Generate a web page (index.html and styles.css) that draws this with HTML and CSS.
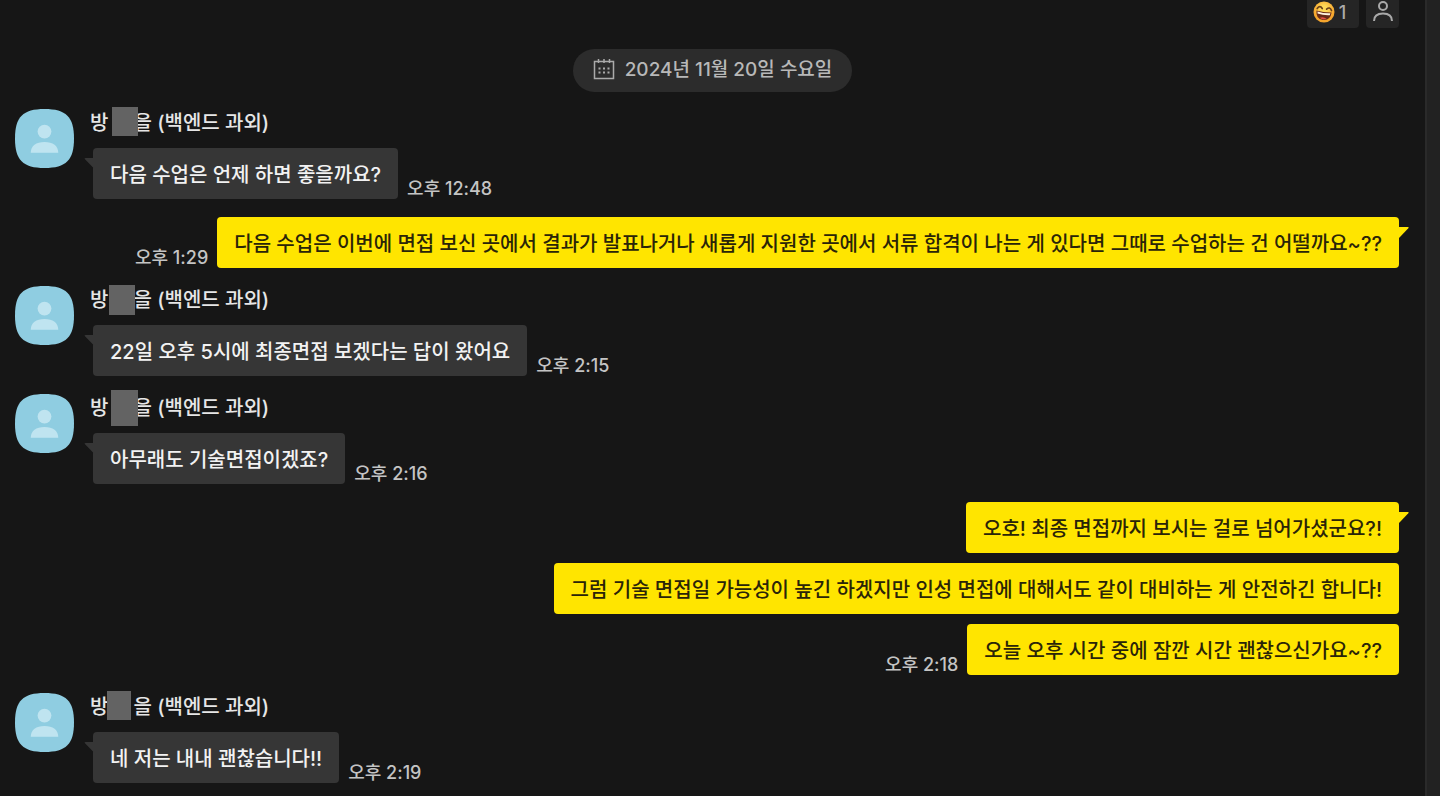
FILE: index.html
```html
<!DOCTYPE html>
<html lang="ko">
<head>
<meta charset="utf-8">
<title>채팅</title>
<link rel="stylesheet" href="styles.css">
</head>
<body>
<svg class="symbols" aria-hidden="true">
  <symbol id="avatar" viewBox="0 0 60 60">
    <path fill="#8fcde1" d="M30 0C52 0 60 8 60 30S52 60 30 60 0 52 0 30 8 0 30 0Z"/>
    <circle cx="30" cy="23" r="7" fill="#bfe4f0"/>
    <path fill="#bfe4f0" d="M16 44.500C16 37.500 21.500 33.500 30 33.500S44 37.500 44 44.500Z"/>
  </symbol>
  <symbol id="tail-left" viewBox="0 0 10 11"><path fill="#363636" d="M10 0H1.500Q-.2 0 1 1.200L10 10.500Z"/></symbol>
  <symbol id="tail-right" viewBox="0 0 10 12"><path fill="#ffe500" d="M0 0H8.800Q10.500 0 9.300 1.300L0 11Z"/></symbol>
</svg>
<div class="app">
  <main class="chat">
    <div class="reactions">
      <button class="reaction" type="button">
        <svg class="emoji" viewBox="0 0 22 22" aria-hidden="true">
          <defs><radialGradient id="face" cy=".35"><stop offset=".3" stop-color="#ffd957"/><stop offset="1" stop-color="#f5a52d"/></radialGradient></defs>
          <circle cx="11" cy="11" r="10.500" fill="url(#face)"/>
          <g transform="rotate(8 11 11)">
            <path d="M3.300 10.500Q11 11.800 18.700 10.500Q18.300 19 11 19T3.300 10.500Z" fill="#682a18"/>
            <path d="M4.500 11.300Q11 12.500 17.500 11.300L17.200 13.300Q11 14.500 4.800 13.300Z" fill="#fff3df"/>
            <path d="M7.500 17.300Q11 15.300 14.500 17.300Q11 19.500 7.500 17.300Z" fill="#e65345"/>
            <path d="M3.800 8.500Q6 4.500 8.800 7.800M13.200 7.800Q16 4.500 18.200 8.500" fill="none" stroke="#68401b" stroke-width="1.700" stroke-linecap="round"/>
          </g>
        </svg>
        <span>1</span>
      </button>
      <button class="reaction reaction-people" type="button" aria-label="공감한 사람">
        <svg class="person" viewBox="0 0 22 22" aria-hidden="true"><g fill="none" stroke="#a9a9a9" stroke-width="2"><circle cx="11" cy="6" r="4"/><path d="M2 21C2 16 5.500 13.500 11 13.500S20 16 20 21"/></g></svg>
      </button>
    </div>

    <div class="date">
      <svg class="calendar" viewBox="0 0 22 22" aria-hidden="true"><path d="M1.500 3.500H20.500V20.500H1.500ZM5.500 1V5M11 1V5M16.500 1V5" fill="none" stroke="#aaa" stroke-width="1.500"/><path d="M5.500 10.500H16.500M5.500 14.500H16.500" stroke="#aaa" stroke-width="2" stroke-dasharray="2 2.500"/></svg>
      <time datetime="2024-11-20">2024년 11월 20일 수요일</time>
    </div>

    <section class="log">
      <article class="incoming">
        <svg class="avatar"><use href="#avatar"/></svg>
        <div class="body">
          <h2 class="name">방<span class="redacted"><i class="mask mask-a"></i></span>을 (백엔드 과외)</h2>
          <div class="line"><p class="bubble"><svg class="tail"><use href="#tail-left"/></svg>다음 수업은 언제 하면 좋을까요?</p><time class="time">오후 12:48</time></div>
        </div>
      </article>

      <article class="outgoing">
        <div class="line"><time class="time">오후 1:29</time><p class="bubble"><svg class="tail"><use href="#tail-right"/></svg>다음 수업은 이번에 면접 보신 곳에서 결과가 발표나거나 새롭게 지원한 곳에서 서류 합격이 나는 게 있다면 그때로 수업하는 건 어떨까요~??</p></div>
      </article>

      <article class="incoming">
        <svg class="avatar"><use href="#avatar"/></svg>
        <div class="body">
          <h2 class="name">방<span class="redacted"><i class="mask mask-b"></i></span>을 (백엔드 과외)</h2>
          <div class="line"><p class="bubble"><svg class="tail"><use href="#tail-left"/></svg>22일 오후 5시에 최종면접 보겠다는 답이 왔어요</p><time class="time">오후 2:15</time></div>
        </div>
      </article>

      <article class="incoming">
        <svg class="avatar"><use href="#avatar"/></svg>
        <div class="body">
          <h2 class="name">방<span class="redacted"><i class="mask mask-c"></i></span>을 (백엔드 과외)</h2>
          <div class="line"><p class="bubble"><svg class="tail"><use href="#tail-left"/></svg>아무래도 기술면접이겠죠?</p><time class="time">오후 2:16</time></div>
        </div>
      </article>

      <article class="outgoing">
        <div class="line"><p class="bubble"><svg class="tail"><use href="#tail-right"/></svg>오호! 최종 면접까지 보시는 걸로 넘어가셨군요?!</p></div>
        <div class="line"><p class="bubble">그럼 기술 면접일 가능성이 높긴 하겠지만 인성 면접에 대해서도 같이 대비하는 게 안전하긴 합니다!</p></div>
        <div class="line"><time class="time">오후 2:18</time><p class="bubble">오늘 오후 시간 중에 잠깐 시간 괜찮으신가요~??</p></div>
      </article>

      <article class="incoming">
        <svg class="avatar"><use href="#avatar"/></svg>
        <div class="body">
          <h2 class="name">방<span class="redacted"><i class="mask mask-d"></i></span>을 (백엔드 과외)</h2>
          <div class="line"><p class="bubble"><svg class="tail"><use href="#tail-left"/></svg>네 저는 내내 괜찮습니다!!</p><time class="time">오후 2:19</time></div>
        </div>
      </article>
    </section>
  </main>
  <div class="gutter"></div>
</div>
</body>
</html>
```

FILE: styles.css
```css
* { box-sizing: border-box; }
body {
  margin: 0;
  background: #161616;
  color: #f2f2f2;
  font-family: Inter, "Noto Sans CJK KR", sans-serif;
  font-size: 20px;
  font-weight: 500;
  line-height: 27px;
}
.symbols { position: absolute; width: 0; height: 0; }
svg { display: block; flex: none; }
.app { display: flex; min-height: 100vh; }
.chat { flex: 1; min-width: 0; padding-bottom: 13px; }
.gutter { width: 15px; background: #222; border-left: 2px solid #2a2a2a; }

.reactions { display: flex; justify-content: flex-end; gap: 7px; padding-right: 26px; }
.reaction {
  display: flex;
  align-items: center;
  justify-content: center;
  gap: 4px;
  width: 52px;
  height: 28px;
  padding: 0 7px 4px 0;
  border: 0;
  border-radius: 0 0 4px 4px;
  background: #252525;
  color: #aaa;
  font: inherit;
  font-size: 18px;
}
.reaction-people { width: 33px; padding: 0 0 6px; }
.emoji, .person { width: 22px; height: 22px; }

.date {
  display: flex;
  align-items: center;
  gap: 10px;
  width: fit-content;
  height: 43px;
  margin: 21px auto 17px;
  padding: 0 20px 3px;
  border-radius: 22px;
  background: #2c2c2c;
  color: #b8b8b8;
  font-size: 19px;
}
.calendar { width: 22px; height: 22px; }

.log { display: flex; flex-direction: column; gap: 18px; padding: 0 26px 0 15px; }
.incoming { display: flex; gap: 16px; }
.avatar { width: 59px; height: 59px; }
.body { min-width: 0; }
.name { margin: 0; padding-top: 1px; height: 39px; font-size: 20px; font-weight: 500; color: #e6e6e6; }
.redacted { display: inline-block; position: relative; width: 25px; height: 20px; vertical-align: top; }
.mask { position: absolute; background: #636363; }
.mask-a { left: 4px; top: -3px; width: 26px; height: 29px; }
.mask-b { left: 1px; top: -2px; width: 26px; height: 30px; }
.mask-c { left: 3px; top: -5px; width: 27px; height: 36px; }
.mask-d { left: -1px; top: -3px; width: 24px; height: 29px; }

.line { display: flex; align-items: flex-end; gap: 9px; }
.incoming .line { padding-left: 3px; }
.outgoing { display: flex; flex-direction: column; gap: 10px; }
.outgoing .line { justify-content: flex-end; }
.bubble {
  position: relative;
  margin: 0;
  padding: 14px 17px 10px;
  border-radius: 4px;
  background: #363636;
}
.outgoing .bubble { background: #ffe500; color: #2a2408; }
.tail { position: absolute; top: 10px; left: -9px; width: 10px; height: 11px; }
.outgoing .tail { left: auto; right: -10px; width: 10px; height: 12px; }
.time { white-space: nowrap; }
.line .time { font-size: 18px; line-height: 20px; color: #c4c4c4; }
```
